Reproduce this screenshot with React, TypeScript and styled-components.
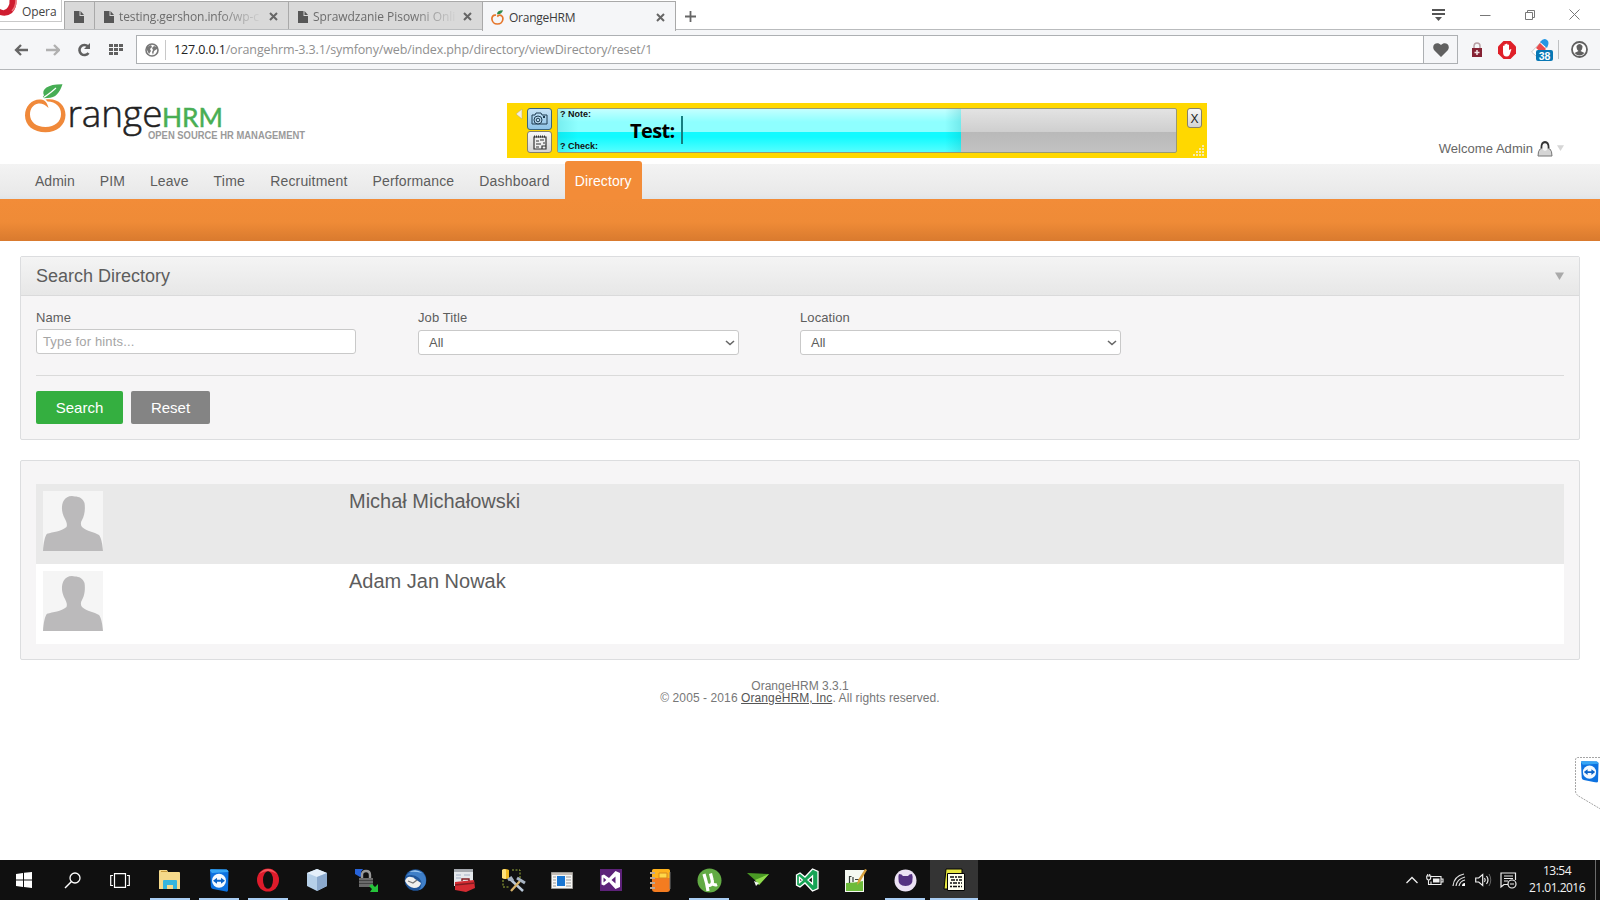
import React from "react";
import styled, { createGlobalStyle, css } from "styled-components";

const GlobalStyle = createGlobalStyle`
  * { box-sizing: border-box; }
  html, body { margin: 0; padding: 0; background: #fff; }
  body { font-family: "Liberation Sans", Arial, sans-serif; color: #5d5d5d; overflow: hidden; }
  svg { display: block; flex: none; }
`;

const chromeFont = css`font-family: "Open Sans", "Noto Sans", sans-serif;`;

const Screen = styled.div`
  position: relative;
  display: flex;
  flex-direction: column;
  width: 1600px;
  height: 900px;
  overflow: hidden;
  background: #fff;
`;

/* ---------- Browser window ---------- */

const TabStrip = styled.div`
  ${chromeFont}
  display: flex;
  height: 30px;
  border-bottom: 1px solid #b9bbbd;
  background: #fff;
`;

const OperaButton = styled.div`
  display: flex;
  align-items: flex-start;
  width: 62px;
  height: 22px;
  margin-right: 2px;
  border: 1px solid #c9c9c9;
  border-width: 0 1px 1px 0;
  font-size: 12px;
  line-height: 24px;
  color: #444;
  span { margin-left: 4px; letter-spacing: -0.1px; }
`;

const Tab = styled.div<{ $width: number; $active?: boolean }>`
  display: flex;
  align-items: center;
  gap: 5px;
  width: ${(p) => p.$width}px;
  height: 28px;
  margin-top: 1px;
  padding: 2px 10px 0 9px;
  border: 1px solid #a9a9a9;
  border-width: 1px 0 0 1px;
  background: ${(p) => (p.$active ? "#f5f6f8" : "#d9d9d9")};
  color: ${(p) => (p.$active ? "#3c3c3c" : "#6c6c6c")};
  font-size: 12px;
  ${(p) => p.$active && "height: 30px; margin-bottom: -1px; padding-left: 8px; border-right-width: 1px; position: relative;"}
`;

const TabTitle = styled.span<{ $fade?: boolean; $spacing?: number }>`
  flex: 1;
  white-space: nowrap;
  letter-spacing: ${(p) => p.$spacing ?? 0}px;
  ${(p) => p.$fade && "mask-image: linear-gradient(90deg, #000 68%, rgba(0, 0, 0, 0.1) 96%);"}
`;

const NewTab = styled.div`
  display: flex;
  align-items: center;
  padding: 3px 0 0 9px;
`;

const WindowControls = styled.div`
  display: flex;
  align-items: center;
  gap: 34px;
  margin-left: auto;
  padding-right: 20px;
`;

const AddressRow = styled.div`
  ${chromeFont}
  display: flex;
  align-items: center;
  height: 40px;
  padding: 0 12px 0 14px;
  border-bottom: 1px solid #b4b7ba;
  background: #f5f6f8;
`;

const NavButtons = styled.div`
  display: flex;
  align-items: center;
  gap: 17px;
  width: 122px;
`;

const AddressField = styled.div`
  display: flex;
  align-items: center;
  width: 1322px;
  height: 29px;
  border: 1px solid #adb0b3;
  background: #fff;
`;

const SiteBadge = styled.div`
  display: flex;
  align-items: center;
  width: 29px;
  height: 20px;
  padding-left: 8px;
  border-right: 1px solid #c8c8c8;
`;

const Url = styled.div`
  flex: 1;
  padding-left: 8px;
  font-size: 12.5px;
  line-height: 25px;
  letter-spacing: -0.12px;
  color: #8f8f8f;
  b { font-weight: 400; color: #222; }
`;

const HeartButton = styled.div`
  display: flex;
  align-items: center;
  justify-content: center;
  width: 34px;
  height: 27px;
  border-left: 1px solid #adb0b3;
  background: #f5f6f8;
`;

const Extensions = styled.div`
  display: flex;
  align-items: center;
  justify-content: space-between;
  flex: 1;
  padding-left: 13px;
`;

const Separator = styled.i`
  width: 1px;
  height: 19px;
  margin: 0 -3px 0 -9px;
  background: #bfc1c3;
`;

/* ---------- Application page ---------- */

const PageHeader = styled.header`
  display: flex;
  justify-content: space-between;
  height: 94px;
  padding: 12px 36px 0 22px;
`;

const Welcome = styled.div`
  display: flex;
  align-items: center;
  height: 32px;
  margin-top: 50px;
  font-size: 13px;
  letter-spacing: 0.05px;
  color: #666;
  svg { margin-left: 4px; }
`;

const Menu = styled.nav`
  display: flex;
  align-items: flex-end;
  gap: 5px;
  height: 35px;
  padding-left: 25px;
  background: linear-gradient(#f3f3f3, #e9e9e9 86%, #dfe5ea);
`;

const MenuItem = styled.a<{ $active?: boolean; $spacing: number }>`
  height: ${(p) => (p.$active ? 38 : 35)}px;
  padding: 0 10px;
  border-radius: 3px 3px 0 0;
  font-size: 14px;
  line-height: ${(p) => (p.$active ? 40 : 34)}px;
  letter-spacing: ${(p) => p.$spacing}px;
  color: ${(p) => (p.$active ? "#fff" : "#5d5d5d")};
  background: ${(p) => (p.$active ? "#f38c38" : "transparent")};
`;

const SubMenu = styled.div`
  height: 42px;
  background: linear-gradient(#f28c38, #ef8b37 55%, #d97a2e);
`;

const Content = styled.main`
  display: flex;
  flex-direction: column;
  gap: 20px;
  padding: 15px 20px 0;
`;

const Panel = styled.section`
  border: 1px solid #dcdddf;
  border-radius: 2px;
  background: #f6f5f6;
`;

const PanelHead = styled.div`
  display: flex;
  align-items: center;
  justify-content: space-between;
  height: 39px;
  padding: 0 15px;
  border-bottom: 1px solid #dadadb;
  background: linear-gradient(#f4f4f4, #e7e7e7);
`;

const PanelTitle = styled.h1`
  margin: 0;
  font-size: 18px;
  font-weight: 400;
  line-height: 38px;
`;

const SearchForm = styled.div`
  height: 143px;
  padding: 0 15px;
`;

const Fields = styled.div`
  display: grid;
  grid-template-columns: repeat(4, 382px);
  height: 80px;
  padding-top: 13px;
  border-bottom: 1px solid #dadada;
`;

const Label = styled.label`
  display: block;
  font-size: 13px;
  line-height: 17px;
  letter-spacing: 0.1px;
`;

const Control = styled.div<{ $select?: boolean }>`
  display: flex;
  align-items: center;
  justify-content: space-between;
  width: ${(p) => (p.$select ? 321 : 320)}px;
  height: 25px;
  margin-top: ${(p) => (p.$select ? 4 : 3)}px;
  padding: 0 3px 0 ${(p) => (p.$select ? 10 : 6)}px;
  border: 1px solid #c9c9c9;
  border-radius: 3px;
  background: #fff;
  font-size: 13px;
  letter-spacing: ${(p) => (p.$select ? 0 : 0.15)}px;
  color: ${(p) => (p.$select ? "#5d5d5d" : "#a5a5a5")};
`;

const Actions = styled.div`
  display: flex;
  gap: 8px;
  padding-top: 15px;
`;

const Button = styled.button<{ $primary?: boolean }>`
  width: ${(p) => (p.$primary ? 87 : 79)}px;
  height: 33px;
  padding: 0;
  border: 0;
  border-radius: 2px;
  background: ${(p) => (p.$primary ? "#34af40" : "#848484")};
  color: #fff;
  font: 15px "Liberation Sans", Arial, sans-serif;
`;

const Results = styled.div`
  padding: 23px 15px 15px;
`;

const PersonRow = styled.div<{ $shaded?: boolean }>`
  display: grid;
  grid-template-columns: 306px 1fr;
  height: 80px;
  padding: 7px;
  background: ${(p) => (p.$shaded ? "#e9e9e9" : "#fff")};
`;

const PersonName = styled.div`
  font-size: 20px;
  line-height: 20px;
`;

const Footer = styled.footer`
  padding-top: 20px;
  text-align: center;
  font-size: 12px;
  line-height: 12px;
  color: #777;
  a { color: #555; text-decoration: underline; }
`;

const Copyright = styled.div`
  letter-spacing: 0.09px;
`;

/* ---------- Floating note window ---------- */

const NoteWindow = styled.div`
  position: absolute;
  left: 507px;
  top: 103px;
  display: flex;
  width: 700px;
  height: 55px;
  padding: 5px;
  background: #ffd800;
`;

const NoteTools = styled.div`
  display: flex;
  flex-direction: column;
  gap: 1px;
  margin: 0 5px 0 4px;
`;

const NoteTool = styled.div<{ $on?: boolean }>`
  display: flex;
  align-items: center;
  justify-content: center;
  width: 25px;
  height: 22px;
  border: 1px solid ${(p) => (p.$on ? "#39647f" : "#85806c")};
  border-radius: 3px;
  background: ${(p) => (p.$on ? "linear-gradient(#c5e2f5, #8fc4e8)" : "linear-gradient(#f7f7f7, #d3d3d3)")};
`;

const NoteField = styled.div`
  display: flex;
  width: 620px;
  height: 45px;
  border: 1px solid #9a9a72;
  border-radius: 2px;
  background: linear-gradient(#e3e3e3, #cfcfcf 53%, #b9b9b9 54%, #c2c2c2);
`;

const NoteFill = styled.div`
  display: flex;
  width: 403px;
  background:
    linear-gradient(90deg, rgba(0, 150, 160, 0.16), transparent 5%, transparent 96%, rgba(0, 150, 160, 0.2)),
    linear-gradient(#c4ffff, #8effff 30%, #8effff 53%, #12faff 54%, #12faff 65%, #55ffff);
`;

const NoteHints = styled.div`
  display: flex;
  flex-direction: column;
  justify-content: space-between;
  width: 72px;
  padding: 0 0 0 2px;
  font-size: 9px;
  line-height: 11px;
  font-weight: 700;
  color: #111;
  white-space: nowrap;
`;

const NoteText = styled.div`
  ${chromeFont}
  display: flex;
  align-items: center;
  font-size: 20px;
  font-weight: 700;
  letter-spacing: -0.6px;
  color: #000;
  i { width: 2px; height: 28px; margin: -2px 0 0 6px; background: #167e80; }
`;

const NoteClose = styled.div`
  display: flex;
  align-items: center;
  justify-content: center;
  width: 15px;
  height: 20px;
  margin-left: 10px;
  padding-top: 2px;
  border: 1px solid #85806c;
  border-radius: 3px;
  background: linear-gradient(#f7f7f7, #d3d3d3);
  font-size: 12px;
  color: #222;
`;

const Grip = styled.div`
  position: absolute;
  right: 2px;
  bottom: 2px;
`;

const SideTab = styled.div`
  position: absolute;
  left: 1575px;
  top: 757px;
`;

/* ---------- Taskbar ---------- */

const Taskbar = styled.div`
  ${chromeFont}
  display: flex;
  height: 40px;
  margin-top: auto;
  background: #101010;
  color: #f2f2f2;
`;

const SystemButton = styled.div`
  display: flex;
  align-items: center;
  justify-content: center;
  width: 48px;
`;

const Apps = styled.div`
  display: flex;
  gap: 1px;
  padding-left: 2px;
`;

const AppButton = styled.div<{ $open?: boolean; $current?: boolean }>`
  display: flex;
  align-items: center;
  justify-content: center;
  width: 48px;
  background: ${(p) => (p.$current ? "#343434" : "transparent")};
  ${(p) => p.$open && `
    background-image: linear-gradient(#a9cdf3, #a9cdf3);
    background-repeat: no-repeat;
    background-size: ${p.$current ? 48 : 40}px 2px;
    background-position: bottom center;
  `}
`;

const Tray = styled.div`
  display: flex;
  align-items: center;
  gap: 8px;
  margin-left: auto;
`;

const Clock = styled.div`
  width: 70px;
  padding-right: 6px;
  font-size: 12px;
  line-height: 17px;
  letter-spacing: -0.5px;
  text-align: center;
  white-space: nowrap;
  transform: translateY(-1px);
`;

const ShowDesktop = styled.div`
  width: 5px;
  height: 40px;
  margin-left: -8px;
  border-left: 1px solid #6b6b6b;
`;

/* ---------- Drawings ---------- */

const PageIcon = () => (
  <svg width="10" height="12" viewBox="0 0 10 12"><path d="M0 0h5.500v5H10v7H0z" fill="#575757" /><path d="M6.500 0L10 4H6.500z" fill="#575757" /></svg>
);

const CloseIcon = () => (
  <svg width="9" height="9" viewBox="0 0 9 9"><path d="M1 1l7 7M8 1L1 8" stroke="#666" strokeWidth="2" /></svg>
);

const OrangeFavicon = () => (
  <svg width="13" height="15" viewBox="0 0 13 15">
    <path d="M5 5.200C2 4.500.8 7 .9 9c.2 3 2.600 5 5.400 5 3.200 0 5.500-2.200 5.600-5 .1-2-1.200-3.900-3.600-3.800-1 0-1.500.8-2 1.400" fill="none" stroke="#e5762b" strokeWidth="1.700" />
    <path d="M6 4.300C6 1.700 8 .4 12 .3 11 3.300 9.500 4.500 6 4.300z" fill="#2d8b4b" />
  </svg>
);

const Logo = () => (
  <svg width="290" height="64" viewBox="22 82 290 64">
    <path fillRule="evenodd" fill="#f0893a" d="M25 115.500C25 105 33 98.500 41 99.500C45 100 47.500 103 48.500 108C45 104.500 42 103.200 38.500 103.500C33 104.500 30 109 30 114.500C30 121.500 36 127 45.500 127C55 127 61 121.500 61 114C61 106.500 56 102 47.500 101.500L45.500 99.500C57 97.500 65.500 104.500 65.500 115C65.500 125 57 132.300 45.500 132.300C33.500 132.300 25 125.500 25 115.500Z" />
    <path d="M44 95.500C41 89 48 84 62.500 84.200C59.500 93 55.500 98.500 46.500 98L44 98.200L42.800 96.500Z" fill="#46ad54" />
    <path d="M43.500 97.500C48 95 52 91.500 56 88" fill="none" stroke="#fff" strokeWidth="1.200" />
    <text x="67.500" y="126.700" fontFamily="Open Sans, sans-serif" fontWeight="300" fontSize="36.500" fill="#222" stroke="#222" strokeWidth=".5" textLength="95" lengthAdjust="spacingAndGlyphs">range</text>
    <text x="162" y="126.500" fontFamily="Lato, sans-serif" fontSize="27.500" fill="#49ae54" stroke="#49ae54" strokeWidth=".5" textLength="61" lengthAdjust="spacingAndGlyphs">HRM</text>
    <text x="148" y="138.500" fontFamily="Liberation Sans, sans-serif" fontWeight="700" fontSize="10" fill="#9a9a9a" textLength="157" lengthAdjust="spacingAndGlyphs">OPEN SOURCE HR MANAGEMENT</text>
  </svg>
);

const Avatar = () => (
  <svg width="60" height="60" viewBox="0 0 60 60">
    <rect width="60" height="60" fill="#f5f5f5" />
    <path d="M0 60C.5 52 2 45 4 42.800C10 41 18 40.500 23.500 36C24.500 33.500 23.500 31 22 28C18.500 22 18 15 20.500 10C23 5.500 28 4 32 5.500C36 5.500 40 7.500 41.500 12C42.500 18 41.500 25 39 29C37.500 31.500 37.500 34 39 36C44 40.500 51 41 56 44C58.500 47 59.500 54 60 60Z" fill="#bbbabb" />
  </svg>
);

const Chevron = () => (
  <svg width="10" height="6" viewBox="0 0 10 6"><path d="M1 1l4 3.500L9 1" fill="none" stroke="#666" strokeWidth="1.600" /></svg>
);

const Triangle = ({ color, size }: { color: string; size: number }) => (
  <svg width={size} height="8" viewBox="0 0 9 8"><path d="M0 .5h9L4.500 8z" fill={color} /></svg>
);

const TeamViewer = ({ size }: { size: number }) => (
  <svg width={size} height={size * 1.150} viewBox="0 0 20 23">
    <path d="M1 1.500Q1 0 2.500.3L17.500.5Q19.500 1 19.500 3L19 21Q19 23 17 22.600L4 20Q2 19.500 1.800 17.500Z" fill="#0d72e0" /><path d="M1 1.500Q1 0 2.500.3L17.500.5Q19.500 1 19.500 3L3 4Z" fill="#35a5f5" />
    <circle cx="10" cy="11.700" r="7" fill="#f4faff" />
    <path d="M4 11.700l4-3v2h4v-2l4 3-4 3v-2H8v2z" fill="#0a63c8" />
  </svg>
);

const VisualStudio = ({ green }: { green?: boolean }) => (
  <svg width="24" height="24" viewBox="0 0 24 24">
    {!green && <path d="M1 1h22v22H1z" fill="#5d2279" />}
    <path fillRule="evenodd" d={green
      ? "M1.500 7L5 5L10 9L17.500 1L23 3.500V20.500L17.500 23L10 15L5 19L1.500 17ZM4.500 9.500V14.500L7.300 12ZM17.500 8V16L13 12Z"
      : "M2.500 7.500L5 6.500L10 10L16.500 3L21 5V19L16.500 21L10 14L5 17.500L2.500 16.500ZM4.500 9.500V14.500L7.300 12ZM16.500 8.500V15.500L12.500 12Z"}
      fill={green ? "#16a355" : "#fff"} stroke={green ? "#fff" : "none"} strokeWidth="1.300" />
  </svg>
);

const appIcons: { name: string; open?: boolean; current?: boolean; art: React.ReactNode }[] = [
  { name: "explorer", open: true, art: <svg width="22" height="20" viewBox="0 0 22 20"><path d="M0 1q0-1 1-1h7l1 2h11q1 0 1 1v16H0z" fill="#f5d98a" /><path d="M2 1h6v1H2z" fill="#c99b3a" /><path d="M4 19v-8q0-1 1-1h12q1 0 1 1v8h-4v-4H8v4z" fill="#35b4dc" /></svg> },
  { name: "teamviewer", open: true, art: <TeamViewer size={20} /> },
  { name: "opera", open: true, art: <svg width="24" height="24" viewBox="0 0 24 24"><ellipse cx="12" cy="12" rx="11" ry="11.500" fill="#de1b2b" /><path d="M3 6Q12-4 21 6Q12 0 3 6" fill="#f4595f" /><ellipse cx="12" cy="12" rx="5" ry="8.800" fill="#101010" /></svg> },
  { name: "virtualbox", art: <svg width="22" height="24" viewBox="0 0 22 24"><path d="M1 5l10-4 10 4v13l-10 5-10-5z" fill="#b5cfe8" /><path d="M1 5l10 4 10-4-10-4z" fill="#e4effa" /><path d="M11 9l10-4v13l-10 5z" fill="#8ba9cd" /></svg> },
  { name: "winscp", art: <svg width="25" height="25" viewBox="0 0 25 25"><path d="M1 1h8L7 4l2 3-3 2-5-3z" fill="#2763d9" /><path d="M8 12V7q0-4 4-4t4 4v5" fill="none" stroke="#9a9a9a" strokeWidth="2.400" /><path d="M5 10h14v9H5z" fill="#6a6a6a" /><path d="M5 12h14v1H5zM5 15h14v1H5z" fill="#444" /><path d="M24 24h-8l2-3-3-3 3-2 3 3 3-3z" fill="#25c43a" /></svg> },
  { name: "thunderbird", art: <svg width="24" height="24" viewBox="0 0 24 24"><circle cx="12.500" cy="12" r="10.800" fill="#1f559a" /><path d="M3 8Q10-1 19 4q6 6 3 13-2 4-6 5 5-7 0-12Q10 5 3 8z" fill="#3f7fc8" /><path d="M6 4q7-4 13 1-7-2-13-1z" fill="#9cc7ef" /><path d="M2 13q2-5 6-4 3 0 4 2l6 4q-1 5-7 5-6-1-9-7z" fill="#f0f0ee" /><path d="M5 13l5 2 4-3" fill="none" stroke="#777" strokeWidth="1.200" /></svg> },
  { name: "toolbox", art: <svg width="24" height="24" viewBox="0 0 24 24"><path d="M2 1h19v17H2z" fill="#e5e8ec" /><path d="M2 1h19v3H2z" fill="#a5a9af" /><path d="M4 7h5M4 10h5M12 7h6" stroke="#a2b0c6" /><path d="M3 14l19-2 1 8-9 4-11-2z" fill="#d42b32" /><path d="M10 13v-2h7v2M3 17l20-2" fill="none" stroke="#811d22" strokeWidth="1.400" /></svg> },
  { name: "database-tools", art: <svg width="26" height="26" viewBox="0 0 26 26"><path d="M2 3q3-2 7 0v8q-3 2-7 0z" fill="#efb923" /><path d="M2 3q3-2 4 0v9q-2 0-4-1z" fill="#ffe07a" /><path d="M12 3h8v8M3 13v7h7" fill="none" stroke="#9fb33b" strokeDasharray="2 1.500" /><path d="M10 12l13 12" stroke="#b9c8d8" strokeWidth="2.500" /><path d="M20 14L11 24" stroke="#d8b36a" strokeWidth="2.300" /><path d="M17 11l8 5M8 13l3-2 2 3" fill="none" stroke="#a7b3c1" strokeWidth="3" /></svg> },
  { name: "viewer", art: <svg width="22" height="17" viewBox="0 0 22 17"><path d="M.5.500h21v16H.5z" fill="#f6f6f4" stroke="#9c9a96" /><path d="M6 4h8v10H6z" fill="#1976d2" /><path d="M1 1h20v2H1z" fill="#c4bdb6" /><path d="M2 5h3M2 8h3M2 11h3M15 5h5M15 8h5M15 11h5M15 14h5M2 14h3" stroke="#999" /></svg> },
  { name: "visual-studio", art: <VisualStudio /> },
  { name: "notebook", art: <svg width="23" height="25" viewBox="0 0 23 25"><rect x="3" y="1" width="18" height="23" rx="3" fill="#f47c20" /><path d="M5 1h14q2 0 2 2v7H3V3q0-2 2-2z" fill="#ffb31d" /><path d="M10 5h8v5h-8z" fill="#ffd84a" stroke="#d8891e" /><path d="M1 5h5M1 10h5M1 15h5M1 20h5" stroke="#b9a898" strokeWidth="1.800" /><path d="M21 4v17" stroke="#777" /></svg> },
  { name: "utorrent", open: true, art: <svg width="25" height="25" viewBox="0 0 25 25"><circle cx="12.500" cy="12.500" r="12" fill="#62ab44" /><path d="M7 6l2.500 9q1.500 4 5 1.500 1.500-2 .5-5L13.500 5.500M15 14q1.500 4 5 2.500M9.500 15l1.500 8" fill="none" stroke="#fff" strokeWidth="3.200" /></svg> },
  { name: "paper-plane", art: <svg width="22" height="14" viewBox="0 0 22 14"><path d="M0 0l22 1-10 11-3-4z" fill="#4a9a24" /><path d="M8 7L22 1 12 12z" fill="#8fdb4d" /><path d="M7 8l5 2-3 3z" fill="#f1f7ee" /></svg> },
  { name: "visual-studio-green", art: <VisualStudio green /> },
  { name: "notepad", art: <svg width="24" height="25" viewBox="0 0 24 25"><path d="M1 2h19v22H1z" fill="#f4f8f1" /><path d="M2 15q8 0 17-2v10H2z" fill="#6dbb3b" /><path d="M5.500 8v7M5.500 8.500h2M9 9v5M11 11.500h6" fill="none" stroke="#38403a" strokeWidth="1.200" /><path d="M21 1l2 1-7 12-3 3 1-5z" fill="#d9a13b" /></svg> },
  { name: "github", open: true, art: <svg width="23" height="23" viewBox="0 0 23 23"><circle cx="11.500" cy="11.500" r="11" fill="#ece2f4" /><path d="M5 5q3 0 4 2h5q1-2 4-2 1 3 .5 5Q19 17 11.500 17T4.500 10Q4 7 5 5z" fill="#553282" /></svg> },
  { name: "note-taker", open: true, current: true, art: <svg width="23" height="24" viewBox="0 0 23 24"><path d="M3 1h16v20H1z" fill="#e6e640" stroke="#050505" /><path d="M4.500 5.500h17v17h-17z" fill="#fffff0" stroke="#050505" /><path d="M7 9h12M8 12h11" stroke="#111" strokeWidth="1.500" strokeDasharray="4 1 2 1" /><path d="M7 15h12M7 18.500h12" stroke="#111" strokeWidth="1.500" strokeDasharray="2 1 4 1" /></svg> },
];

const menuItems = [
  { label: "Admin", spacing: 0.02 },
  { label: "PIM", spacing: 0.1 },
  { label: "Leave", spacing: 0.08 },
  { label: "Time", spacing: 0.25 },
  { label: "Recruitment", spacing: 0.17 },
  { label: "Performance", spacing: 0.15 },
  { label: "Dashboard", spacing: 0.22 },
  { label: "Directory", spacing: 0.1 },
];
const people = ["Michał Michałowski", "Adam Jan Nowak"];

const BrowserChrome = () => (
  <>
    <TabStrip>
      <OperaButton>
        <svg width="18" height="17" viewBox="0 0 18 17"><path d="M0 9Q5 12 8 7Q10 4 9.500 0H16.500Q17 8 12 13Q7 17 0 15Z" fill="#cf1d30" /><path d="M16 0q0 7-4 11" fill="none" stroke="#ee7a80" strokeWidth="1.500" /></svg>
        <span>Opera</span>
      </OperaButton>
      <Tab $width={30}><PageIcon /></Tab>
      <Tab $width={194}><PageIcon /><TabTitle $fade $spacing={-0.1}>testing.gershon.info/wp-c</TabTitle><CloseIcon /></Tab>
      <Tab $width={194}><PageIcon /><TabTitle $fade $spacing={-0.05}>Sprawdzanie Pisowni Onli</TabTitle><CloseIcon /></Tab>
      <Tab $width={194} $active><OrangeFavicon /><TabTitle $spacing={-0.25}>OrangeHRM</TabTitle><CloseIcon /></Tab>
      <NewTab><svg width="11" height="11" viewBox="0 0 11 11"><path d="M5.500 0v11M0 5.500h11" stroke="#666" strokeWidth="1.800" /></svg></NewTab>
      <WindowControls>
        <svg width="14" height="13" viewBox="0 0 14 13"><path d="M0 2h13M0 6h13" stroke="#555" strokeWidth="2" /><path d="M3 9h7l-3.500 4z" fill="#555" /></svg>
        <svg width="11" height="10" viewBox="0 0 11 10"><path d="M0 5.500h10.500" stroke="#777" /></svg>
        <svg width="10" height="10" viewBox="0 0 10 10"><path d="M.5 2.500h7v7h-7zM2.500 2.500v-2h7v7h-2" fill="none" stroke="#777" /></svg>
        <svg width="11" height="11" viewBox="0 0 11 11"><path d="M.5.500l10 10m0-10l-10 10" stroke="#777" /></svg>
      </WindowControls>
    </TabStrip>
    <AddressRow>
      <NavButtons>
        <svg width="15" height="12" viewBox="0 0 15 12"><path d="M7 1L2 6l5 5M2 6h12" fill="none" stroke="#666" strokeWidth="2.300" /></svg>
        <svg width="14" height="12" viewBox="0 0 14 12"><path d="M8 1l5 5-5 5M13 6H0" fill="none" stroke="#b0b0b0" strokeWidth="2.300" /></svg>
        <svg width="15" height="14" viewBox="0 0 15 14"><path d="M11 3.500A5 5 0 1 0 11.500 10" fill="none" stroke="#606060" strokeWidth="2.600" /><path d="M13 0v6H7z" fill="#606060" /></svg>
        <svg width="15" height="12" viewBox="0 0 15 12"><path d="M0 1.500h14M0 5.500h14M0 9.500h9" stroke="#606060" strokeWidth="3" strokeDasharray="4 1" /></svg>
      </NavButtons>
      <AddressField>
        <SiteBadge>
          <svg width="14" height="14" viewBox="0 0 14 14"><circle cx="7" cy="7" r="6" fill="#fff" stroke="#777" strokeWidth="1.600" /><path d="M2 4l4-2 1 2-2 2 1 2-2 3-2-4zM9 3l3 1v2l-3 2-1 4-1-3 1-2-1-2z" fill="#777" /></svg>
        </SiteBadge>
        <Url><b>127.0.0.1</b>/orangehrm-3.3.1/symfony/web/index.php/directory/viewDirectory/reset/1</Url>
        <HeartButton><svg width="16" height="14" viewBox="0 0 16 14"><path d="M8 14L1 7C-2 2 4-2 8 2c4-4 10 0 7 5z" fill="#606060" /></svg></HeartButton>
      </AddressField>
      <Extensions>
        <svg width="12" height="16" viewBox="0 0 12 16"><path d="M3 6V4.500Q3 1 6 1t3 3v2" fill="none" stroke="#b8a0a4" strokeWidth="1.500" /><path d="M1 6h10v9H1z" fill="#852233" /><path d="M6 8v5M3.500 10.500h5" stroke="#f3e6e8" strokeWidth="1.500" /></svg>
        <svg width="18" height="18" viewBox="0 0 18 18"><path d="M5.500 0h7L18 5.500v7L12.500 18h-7L0 12.500v-7z" fill="#df2029" /><path d="M5 11V5q1-1 1.500 0V3.500q1-1 1.500 0V3q1-1 1.500 0v1q1-1 1.500 0v5l2-1q.8.500 0 1.500L11.500 14q-1 1.500-3 1.500-3.500 0-3.500-4.500z" fill="#fff" /></svg>
        <svg width="22" height="23" viewBox="0 0 22 23"><path d="M.5 14L10 4l5 5-10 9z" fill="#fff" stroke="#c9c9c9" /><path d="M5 10l4-5 6 6-4 4z" fill="#e94b4d" /><path d="M9 4q4-5 7-2 3 2 0 8z" fill="#2697e5" /><rect x="5" y="12" width="17" height="11" rx="2" fill="#0878b5" /><text x="13.500" y="21.500" textAnchor="middle" fontFamily="Liberation Sans, sans-serif" fontWeight="700" fontSize="10.500" fill="#fff">38</text></svg>
        <Separator />
        <svg width="17" height="17" viewBox="0 0 17 17"><circle cx="8.500" cy="8.500" r="7.500" fill="#fff" stroke="#606060" strokeWidth="1.800" /><path d="M5.500 5q3-4 6 0 0 4-2 5l4 2q-5 5-10 0l4-2q-2-1-2-5z" fill="#606060" /></svg>
      </Extensions>
    </AddressRow>
  </>
);

const SelectField = ({ label }: { label: string }) => (
  <div><Label>{label}</Label><Control $select><span>All</span><Chevron /></Control></div>
);

const Note = () => (
  <NoteWindow>
    <svg width="11" height="14" viewBox="0 0 11 14"><path d="M10 1v10L4 6z" fill="#f4efe1" stroke="#b6a967" strokeWidth=".5" /></svg>
    <NoteTools>
      <NoteTool $on><svg width="17" height="14" viewBox="0 0 17 14"><path d="M1 3h3l1-2h5l1 2h5v9H1z" fill="none" stroke="#1f3d52" /><circle cx="7" cy="8" r="4" fill="#b9daf0" stroke="#1f3d52" /><circle cx="7" cy="8" r="1.800" fill="none" stroke="#1f3d52" /><path d="M12 5h2" stroke="#1f3d52" strokeWidth="2" /></svg></NoteTool>
      <NoteTool><svg width="16" height="15" viewBox="0 0 16 15"><path d="M2 2h12v12H2z" fill="#eee" stroke="#333" strokeWidth="1.200" /><path d="M2 1.500h12" stroke="#333" strokeWidth="2" strokeDasharray="1 1" /><path d="M4 6h3M8 5h4M4 9h5M11 8h2M4 12h3M10 14v-3h4" fill="none" stroke="#333" strokeWidth="1.200" /></svg></NoteTool>
    </NoteTools>
    <NoteField>
      <NoteFill>
        <NoteHints><span>? Note:</span><span>? Check:</span></NoteHints>
        <NoteText>Test:<i /></NoteText>
      </NoteFill>
    </NoteField>
    <NoteClose>X</NoteClose>
    <Grip><svg width="12" height="12" viewBox="0 0 12 12"><path d="M10 1v11M7 4v8M4 7v5M1 10v2" stroke="#f3efdc" strokeWidth="1.600" strokeDasharray="2 1" /></svg></Grip>
  </NoteWindow>
);

export default function App() {
  return (
    <Screen>
      <GlobalStyle />
      <BrowserChrome />
      <PageHeader>
        <Logo />
        <Welcome>
          Welcome Admin
          <svg width="16" height="17" viewBox="0 0 16 17"><path d="M1 16q0-5 2-7 5-3 10 0 2 2 2 7z" fill="#d5d5d5" stroke="#777" /><path d="M3.500 8Q3.500 1 8 1t4.500 7z" fill="#333" /><ellipse cx="8" cy="7" rx="2.700" ry="3.800" fill="#f7f7f7" /></svg>
          <Triangle color="#d6d6d6" size={7} />
        </Welcome>
      </PageHeader>
      <Menu>
        {menuItems.map((item) => (
          <MenuItem key={item.label} $active={item.label === "Directory"} $spacing={item.spacing}>{item.label}</MenuItem>
        ))}
      </Menu>
      <SubMenu />
      <Content>
        <Panel>
          <PanelHead><PanelTitle>Search Directory</PanelTitle><Triangle color="#a9a9a9" size={9} /></PanelHead>
          <SearchForm>
            <Fields>
              <div><Label>Name</Label><Control>Type for hints...</Control></div>
              <SelectField label="Job Title" />
              <SelectField label="Location" />
            </Fields>
            <Actions><Button $primary>Search</Button><Button>Reset</Button></Actions>
          </SearchForm>
        </Panel>
        <Panel>
          <Results>
            {people.map((name, i) => <PersonRow key={name} $shaded={i % 2 === 0}><Avatar /><PersonName>{name}</PersonName></PersonRow>)}
          </Results>
        </Panel>
      </Content>
      <Footer>
        <div>OrangeHRM 3.3.1</div>
        <Copyright>© 2005 - 2016 <a>OrangeHRM, Inc</a>. All rights reserved.</Copyright>
      </Footer>
      <Taskbar>
        <SystemButton><svg width="16" height="16" viewBox="0 0 16 16"><path d="M0 2l7-1v6.500H0zM8 .8L16 0v7.500H8zM0 8.500h7V15l-7-1zM8 8.500h8V16l-8-.9z" fill="#fff" /></svg></SystemButton>
        <SystemButton><svg width="17" height="17" viewBox="0 0 17 17"><circle cx="11" cy="6" r="5" fill="none" stroke="#fff" strokeWidth="1.300" /><path d="M7.500 9.500L1 16" stroke="#fff" strokeWidth="1.400" /></svg></SystemButton>
        <SystemButton><svg width="20" height="15" viewBox="0 0 20 15"><path d="M4.500.700h11v13.600h-11zM3 2.500H.7v10H3M17 2.500h2.300v10H17" fill="none" stroke="#fff" strokeWidth="1.200" /></svg></SystemButton>
        <Apps>{appIcons.map((app) => <AppButton key={app.name} $open={app.open} $current={app.current}>{app.art}</AppButton>)}</Apps>
        <Tray>
          <svg width="12" height="8" viewBox="0 0 12 8"><path d="M.5 7L6 1.500 11.500 7" fill="none" stroke="#eee" strokeWidth="1.300" /></svg>
          <svg width="18" height="13" viewBox="0 0 18 13"><path d="M5 2.500h10v8H5v-3M15.500 5h1.500v3h-1.500M2.500 6v4.500H5M.7 2v1.500q0 2.500 2 2.500t2-2.500V2zM1.700 0v2M3.700 0v2" fill="none" stroke="#eee" strokeWidth="1.100" /><path d="M7 4.500h6.500v4H7z" fill="#eee" /></svg>
          <svg width="15" height="14" viewBox="0 0 15 14"><path d="M1 13Q2 3 12 1M4 13q1-7 9-9M7 13q1-5 6-6" fill="none" stroke="#ddd" strokeWidth="1.200" /><path d="M10 13q0-3 3-3v3z" fill="#fff" /></svg>
          <svg width="17" height="14" viewBox="0 0 17 14"><path d="M.7 5h3l4-3.500v11L3.700 9h-3z" fill="none" stroke="#eee" strokeWidth="1.200" /><path d="M9.500 5q1.500 2 0 4M11.500 3q3 4 0 8" fill="none" stroke="#eee" strokeWidth="1.200" /><path d="M14 1q3.500 6 0 12" fill="none" stroke="#666" /></svg>
          <svg width="17" height="17" viewBox="0 0 17 17"><path d="M8 12.500H4L1 15v-3V1h14.500v7M4 4h9M4 6.500h9M4 9h4" fill="none" stroke="#eee" strokeWidth="1.200" /><circle cx="12" cy="12" r="4" fill="#101010" stroke="#eee" strokeWidth="1.200" /><path d="M10 12h4" stroke="#eee" /></svg>
          <Clock>13:54<br />21.01.2016</Clock>
          <ShowDesktop />
        </Tray>
      </Taskbar>
      <Note />
      <SideTab>
        <svg width="25" height="54" viewBox="0 0 25 54"><path d="M25 .5H3Q.5.500.5 3v31q0 3 3 5l22 13" fill="#fff" stroke="#a5a5a5" strokeDasharray="2 1" /><g transform="translate(5 4)"><TeamViewer size={19} /></g></svg>
      </SideTab>
    </Screen>
  );
}
